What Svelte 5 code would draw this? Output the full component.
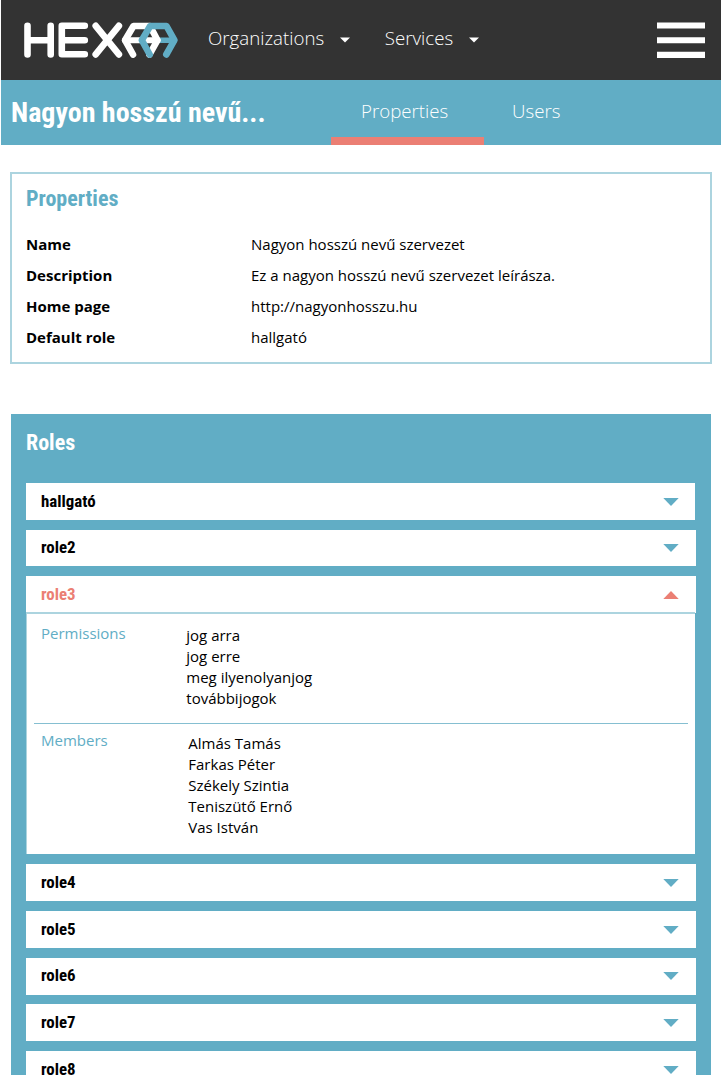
<script>
  const menus = ['Organizations', 'Services'];
  const details = [
    ['Name', 'Nagyon hosszú nevű szervezet'],
    ['Description', 'Ez a nagyon hosszú nevű szervezet leírásza.'],
    ['Home page', 'http://nagyonhosszu.hu'],
    ['Default role', 'hallgató']
  ];
  const roles = ['hallgató', 'role2', 'role3', 'role4', 'role5', 'role6', 'role7', 'role8'];
  const permissions = ['jog arra', 'jog erre', 'meg ilyenolyanjog', 'továbbijogok'];
  const members = ['Almás Tamás', 'Farkas Péter', 'Székely Szintia', 'Teniszütő Ernő', 'Vas István'];
  let open = $state('role3');
</script>

<div class="page">
  <header class="top">
    <svg class="logo" width="156" height="38" viewBox="23 21 156 38" fill="none" stroke="#fff" stroke-width="6.6" stroke-linecap="round" stroke-linejoin="round">
      <path d="M27.5 25.7V54.4M50.7 25.7V54.4M27.5 40.2H50.7" />
      <path d="M84.8 25.8H61.8V54.3H84.8M61.8 40.2H84.8" />
      <path d="M95.7 25.8L118.9 54.4M118.9 25.8L95.7 54.4" />
      <path stroke="#61adc5" stroke-width="5.6" d="M158 40.2H174.4" />
      <path d="M133 54.5L125 40.2L133.5 26H150L157.5 40.2L149.5 54.5" />
      <path stroke-width="6" d="M125 40.2H157.5" />
      <path stroke="#61adc5" d="M149.7 54.5L141.8 40.2L150.2 26H166.5L174.4 40.2L166.3 54.5" />
    </svg>
    <nav class="menus">
      {#each menus as m}
        <a class="menu">{m}<svg width="10" height="6" viewBox="0 0 10 6"><path d="M0 .5H10L5 5.5Z" fill="#fff" /></svg></a>
      {/each}
    </nav>
    <svg class="burger" width="48" height="36" viewBox="0 0 48 36"><path d="M0 .4H48V6.4H0ZM0 15.3H48V21.3H0ZM0 29.8H48V36H0Z" fill="#fff" /></svg>
  </header>

  <div class="sub">
    <h1 class="cond">Nagyon hosszú nevű...</h1>
    <nav class="tabs">
      <a class="tab active">Properties</a>
      <a class="tab">Users</a>
    </nav>
  </div>

  <section class="card">
    <h2 class="cond">Properties</h2>
    <dl>
      {#each details as [k, v]}
        <dt>{k}</dt>
        <dd>{v}</dd>
      {/each}
    </dl>
  </section>

  <section class="roles">
    <h2 class="cond">Roles</h2>
    <div class="list">
      {#each roles as r}
        <div class="role" class:open={open === r}>
          <button class="head cond" onclick={() => (open = open === r ? '' : r)}>
            {r}
            <svg width="16" height="8" viewBox="0 0 16 8"><path d={open === r ? 'M.3 8H15.7L8 0Z' : 'M.3 0H15.7L8 8Z'} fill="currentColor" /></svg>
          </button>
          {#if open === r}
            <div class="body">
              <div class="group perms">
                <h3>Permissions</h3>
                <ul>{#each permissions as p}<li>{p}</li>{/each}</ul>
              </div>
              <div class="group mems">
                <h3>Members</h3>
                <ul>{#each members as p}<li>{p}</li>{/each}</ul>
              </div>
            </div>
          {/if}
        </div>
      {/each}
    </div>
  </section>
</div>

<style>
  :global(body) { background: #fff; }
  .page { height: 1089px; overflow: hidden; font-family: "Open Sans", sans-serif; font-size: 15px; color: #000; }
  .page * { box-sizing: border-box; }
  h1, h2, h3, dl, dd, ul { margin: 0; padding: 0; font-weight: inherit; }
  .cond { font-family: "Roboto Condensed", Roboto, sans-serif; font-stretch: 75%; font-weight: 700; }
  .top { height: 80px; margin-left: 1px; background: #333; display: flex; align-items: center; padding: 0 16px 0 22px; color: #fff; font-weight: 300; font-size: 18.7px; }
  .logo { flex: none; }
  .menus { display: flex; gap: 34.3px; margin-left: 29px; margin-top: -6px; }
  .menu { display: flex; align-items: center; gap: 16.3px; }
  .menu svg { margin-top: 6px; }
  .burger { margin-left: auto; }
  .sub { height: 65px; margin-left: 1px; background: #61adc5; display: flex; color: #fff; }
  h1 { width: 330px; padding-left: 10px; font-size: 28px; line-height: 66px; white-space: nowrap; }
  .tabs { display: flex; font-size: 18.7px; font-weight: 300; line-height: 62px; }
  .tab { padding: 0 29px 0 28px; height: 65px; }
  .tab.active { width: 153px; padding: 0 0 0 30px; border-bottom: 8px solid #eb7f74; }
  .card { margin: 27px 9px 0 10px; height: 192px; border: 2px solid #acd4df; padding: 10px 14px; }
  h2 { font-size: 22px; line-height: 30px; }
  .card h2 { color: #61adc5; }
  dl { display: grid; grid-template-columns: 225px 1fr; grid-auto-rows: 31px; margin-top: 15px; line-height: 31px; }
  dt { font-weight: 700; }
  .roles { margin: 50px 10px 0 11px; height: 661px; background: #61adc5; padding: 14px 15px 0; color: #fff; overflow: hidden; }
  .list { margin-top: 25px; display: grid; gap: 9.9px; color: #000; }
  .role:first-child { margin-right: 1px; }
  .role:first-child .head { padding-right: 15px; }
  .head { display: flex; width: 100%; height: 36.8px; align-items: center; justify-content: space-between; border: 0; background: #fff; padding: 0 17px 1.7px 15px; font-size: 16.9px; color: #000; text-align: left; }
  .role:first-child .head { padding-right: 16px; }
  .head svg { color: #61adc5; margin-top: 2px; }
  .open .head { padding-bottom: 1px; }
  .open .head, .open .head svg { color: #eb7f74; }
  .body { height: 242.3px; margin-right: 1px; background: #fff; border: 1px solid #acd4df; border-width: 2px 0 0 1px; margin-top: -1px; padding: 0 7px; }
  .group { display: flex; padding-left: 7px; }
  h3 { width: 145.3px; font-size: 15px; line-height: 21px; color: #61adc5; }
  ul { list-style: none; line-height: 21px; }
  .perms { height: 110px; padding-top: 9px; border-bottom: 1px solid #85bfd1; }
  .perms ul { padding-top: 2px; }
  .mems { padding-top: 6px; }
  .mems ul { padding: 3px 0 0 2px; }
</style>
